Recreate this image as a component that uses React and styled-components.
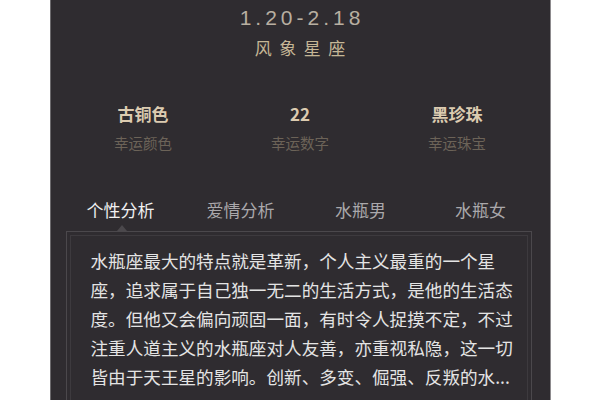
import React from 'react';
import styled, { createGlobalStyle } from 'styled-components';

const GlobalStyle = createGlobalStyle`
  html, body {
    margin: 0;
    padding: 0;
    background: #ffffff;
  }
  body {
    font-family: "Noto Sans CJK SC", "Noto Sans", sans-serif;
  }
`;

const lucky = [
  { value: '古铜色', label: '幸运颜色' },
  { value: '22', label: '幸运数字' },
  { value: '黑珍珠', label: '幸运珠宝' },
];

const tabs = ['个性分析', '爱情分析', '水瓶男', '水瓶女'];

const intro =
  '水瓶座最大的特点就是革新，个人主义最重的一个星座，追求属于自己独一无二的生活方式，是他的生活态度。但他又会偏向顽固一面，有时令人捉摸不定，不过注重人道主义的水瓶座对人友善，亦重视私隐，这一切皆由于天王星的影响。创新、多变、倔强、反叛的水...';

const App = () => {
  return (
    <>
      <GlobalStyle />
      <Panel>
        <DateRange>1.20-2.18</DateRange>
        <Element>风象星座</Element>

        <LuckyRow>
          {lucky.map((item) => (
            <LuckyItem key={item.label}>
              <LuckyValue>{item.value}</LuckyValue>
              <LuckyLabel>{item.label}</LuckyLabel>
            </LuckyItem>
          ))}
        </LuckyRow>

        <Divider />

        <TabBar>
          {tabs.map((t, i) => (
            <Tab key={t} $active={i === 0}>
              {t}
            </Tab>
          ))}
        </TabBar>

        <ContentBox>
          <ContentText>{intro}</ContentText>
        </ContentBox>
      </Panel>
    </>
  );
};

const Panel = styled.div`
  width: 499px;
  height: 400px;
  margin: 0 auto;
  background: #2f2c30;
  box-shadow: 1px 0 0 #8d8b8e, -1px 0 0 #6c6a6d;
  overflow: hidden;
  display: flex;
  flex-direction: column;
`;

const DateRange = styled.div`
  height: 35px;
  line-height: 35px;
  text-align: center;
  font-family: "Liberation Sans", Arial, sans-serif;
  font-size: 21px;
  letter-spacing: 4px;
  padding-left: 4px;
  color: #b8afa1;
`;

const Element = styled.div`
  height: 26px;
  line-height: 26px;
  text-align: center;
  font-size: 17px;
  letter-spacing: 7.5px;
  padding-left: 7.5px;
  color: #c6b796;
`;

const LuckyRow = styled.div`
  display: grid;
  grid-template-columns: repeat(3, 157px);
  margin: 41px 0 0 14px;
`;

const LuckyItem = styled.div`
  display: flex;
  flex-direction: column;
  align-items: center;
  gap: 7px;
`;

const LuckyValue = styled.div`
  height: 24px;
  line-height: 24px;
  font-size: 17px;
  font-weight: 700;
  color: #dccbb0;
`;

const LuckyLabel = styled.div`
  height: 20px;
  line-height: 20px;
  font-size: 14.5px;
  color: #6c6358;
`;

const Divider = styled.div`
  height: 1px;
  width: 463px;
  margin: 26px 0 0 17px;
  background: #3c393d;
`;

const TabBar = styled.div`
  display: grid;
  grid-template-columns: repeat(4, 120px);
  margin: 19px 0 0 10px;
`;

const Tab = styled.div`
  position: relative;
  height: 24px;
  line-height: 24px;
  text-align: center;
  font-size: 17px;
  color: ${(p) => (p.$active ? '#f0f0f0' : '#aaa8ab')};

  &::after {
    content: '';
    display: ${(p) => (p.$active ? 'block' : 'none')};
    position: absolute;
    left: 50%;
    bottom: -9px;
    margin-left: -4px;
    border-left: 5px solid transparent;
    border-right: 5px solid transparent;
    border-bottom: 6px solid #4b484c;
  }
`;

const ContentBox = styled.div`
  width: 466px;
  box-sizing: border-box;
  margin: 9px 0 0 15px;
  padding: 14px 0 20px 24px;
  border: 1px solid #4b484c;
  border-bottom: none;
  box-shadow: inset 0 0 0 3px #2f2c30, inset 0 0 0 4px #3d3a3e;
  flex: 1;
`;

const ContentText = styled.p`
  margin: 0;
  width: 430px;
  font-size: 17.6px;
  line-height: 29px;
  color: #e4e4e4;
`;

export default App;
